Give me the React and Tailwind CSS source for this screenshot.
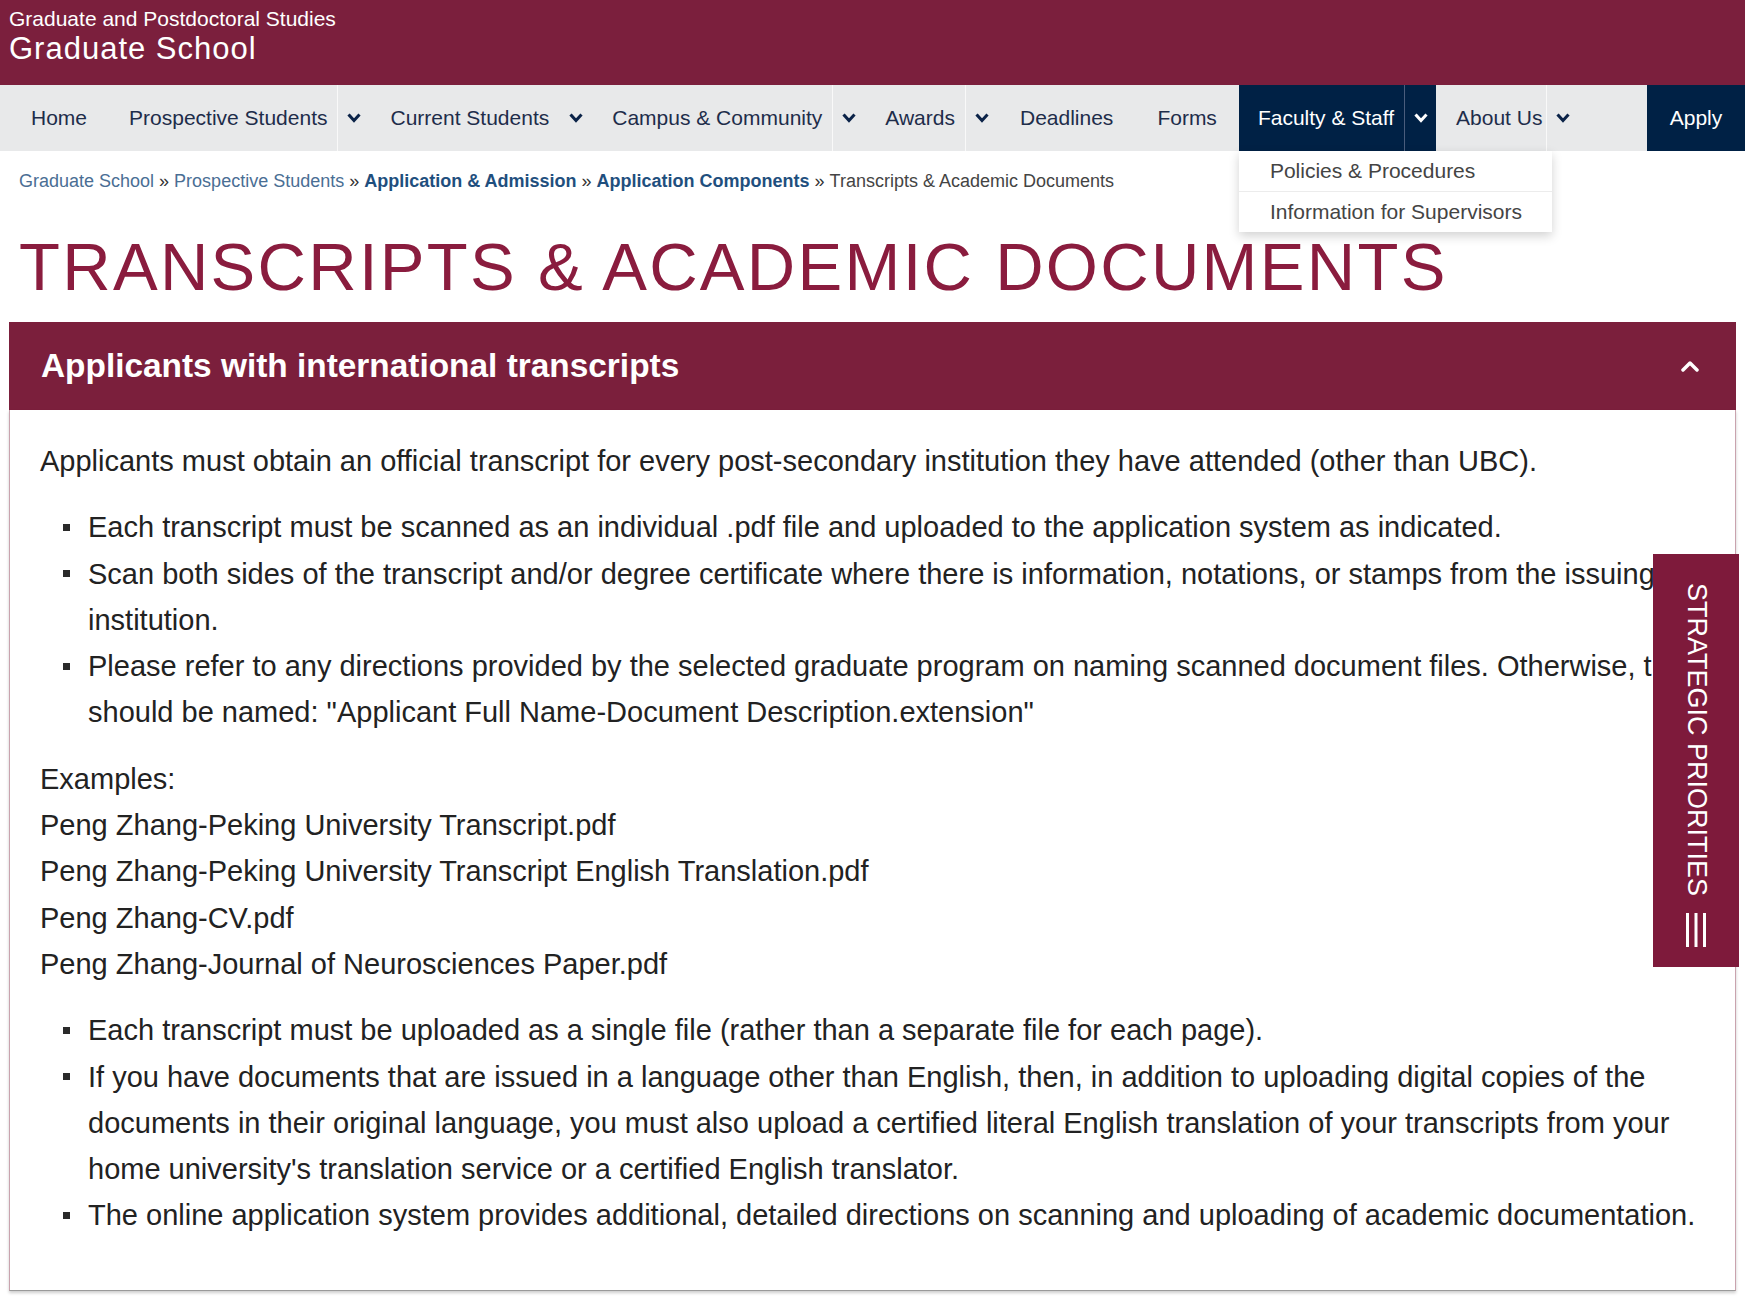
import React from 'react'

const Chevron = ({ className = '' }) => (
  <svg viewBox="0 0 14 12" className={`w-[14px] h-[12px] ${className}`} fill="none" stroke="currentColor" strokeWidth="3" strokeLinecap="square">
    <polyline points="2.5,3.5 7,8.5 11.5,3.5" />
  </svg>
)

function NavLink({ label }) {
  return <a className="flex items-center px-[22px] h-full text-[#1e2d4a]">{label}</a>
}

function NavDrop({ label, divider = true, textPr = 'pr-[10px]' }) {
  return (
    <div className="flex items-center h-full">
      <a className={`flex items-center pl-[20px] ${textPr} h-full text-[#1e2d4a]`}>{label}</a>
      <button className={`flex items-center justify-center w-[33px] h-full text-[#0b2348] ${divider ? 'border-l border-[#f9f9f9]' : ''}`}>
        <Chevron />
      </button>
    </div>
  )
}

const bullets1 = [
  'Each transcript must be scanned as an individual .pdf file and uploaded to the application system as indicated.',
  'Scan both sides of the transcript and/or degree certificate where there is information, notations, or stamps from the issuing institution.',
  'Please refer to any directions provided by the selected graduate program on naming scanned document files. Otherwise, they should be named: "Applicant Full Name-Document Description.extension"',
]

const bullets2 = [
  'Each transcript must be uploaded as a single file (rather than a separate file for each page).',
  "If you have documents that are issued in a language other than English, then, in addition to uploading digital copies of the documents in their original language, you must also upload a certified literal English translation of your transcripts from your home university's translation service or a certified English translator.",
  'The online application system provides additional, detailed directions on scanning and uploading of academic documentation.',
]

function BulletList({ items, className = '' }) {
  return (
    <ul className={className}>
      {items.map((t, i) => (
        <li key={i} className="flex">
          <span className="flex items-center w-[48px] h-[46.3px] pl-[23px] shrink-0">
            <span className="block w-[7px] h-[7px] bg-[#2a2a2a]" />
          </span>
          <span className="flex-1">{t}</span>
        </li>
      ))}
    </ul>
  )
}

export default function App() {
  return (
    <div className="relative w-full h-[1301px] overflow-hidden bg-white font-['Liberation_Sans',Arial,sans-serif]">
      {/* top banner */}
      <header className="h-[85px] bg-[#7b1f3d] text-white pl-[9px] pt-[7px]">
        <p className="text-[21px] leading-[24px]">Graduate and Postdoctoral Studies</p>
        <p className="text-[31px] leading-[36px] tracking-[1px]">Graduate School</p>
      </header>

      {/* main nav */}
      <nav className="flex items-center h-[66px] bg-[#e8e9ea] pl-[9px] text-[21px]">
        <NavLink label="Home" />
        <NavDrop label="Prospective Students" />
        <NavDrop label="Current Students" divider={false} />
        <NavDrop label="Campus & Community" />
        <NavDrop label="Awards" />
        <NavLink label="Deadlines" />
        <NavLink label="Forms" />
        <div className="relative flex items-center h-full bg-[#002145] text-white">
          <a className="flex items-center h-full pl-[19px] pr-[10px]">Faculty &amp; Staff</a>
          <button className="flex items-center justify-center w-[32px] h-full border-l border-[#4a5d7c]">
            <Chevron />
          </button>
          <div className="absolute left-0 top-full z-10 w-[313px] bg-white shadow-[0_4px_10px_rgba(0,0,0,0.18)] text-[#444] text-[21px]">
            <div className="h-[41px] flex items-center pl-[31px] border-b border-[#ececec]">Policies &amp; Procedures</div>
            <div className="h-[40px] flex items-center pl-[31px]">Information for Supervisors</div>
          </div>
        </div>
        <NavDrop label="About Us" textPr="pr-[4px]" />
        <div className="flex-1" />
        <a className="flex items-center justify-center w-[98px] h-full bg-[#002145] text-white">Apply</a>
      </nav>

      {/* breadcrumb */}
      <div className="pl-[19px] pt-[18px] text-[18px] leading-[24px] text-[#333]">
        <a className="text-[#4a6e94]">Graduate School</a>
        <span className="mx-[5px]">»</span>
        <a className="text-[#4a6e94]">Prospective Students</a>
        <span className="mx-[5px]">»</span>
        <a className="font-bold text-[#1f4f7e]">Application &amp; Admission</a>
        <span className="mx-[5px]">»</span>
        <a className="font-bold text-[#1f4f7e]">Application Components</a>
        <span className="mx-[5px]">»</span>
        <span className="text-[#444]">Transcripts &amp; Academic Documents</span>
      </div>

      <h1 className="mt-[40px] ml-[19px] text-[67px] leading-[67px] tracking-[2.3px] text-[#8a1c3e]">
        TRANSCRIPTS &amp; ACADEMIC DOCUMENTS
      </h1>

      {/* accordion */}
      <section className="mx-[9px] mt-[22px]">
        <div className="flex items-center justify-between h-[88px] bg-[#7b1f3c] pl-[32px] pr-[36px] text-white">
          <h2 className="text-[33.4px] font-bold">Applicants with international transcripts</h2>
          <svg viewBox="0 0 20 12" className="w-[20px] h-[12px]" fill="none" stroke="currentColor" strokeWidth="3.5" strokeLinecap="round" strokeLinejoin="round">
            <polyline points="3,10 10,3 17,10" />
          </svg>
        </div>
        <div className="border-x border-b border-x-[#c9a3ae] border-b-[#9a9a9a] shadow-[0_2px_3px_rgba(0,0,0,0.2)] pl-[30px] pr-[18px] pt-[28px] pb-[31px] text-[29px] leading-[46.3px] text-[#222]">
          <p>Applicants must obtain an official transcript for every post-secondary institution they have attended (other than UBC).</p>
          <BulletList items={bullets1} className="mt-[20px]" />
          <div className="mt-[20px]">
            <p>Examples:</p>
            <p>Peng Zhang-Peking University Transcript.pdf</p>
            <p>Peng Zhang-Peking University Transcript English Translation.pdf</p>
            <p>Peng Zhang-CV.pdf</p>
            <p>Peng Zhang-Journal of Neurosciences Paper.pdf</p>
          </div>
          <BulletList items={bullets2} className="mt-[20px] mb-[20px]" />
        </div>
      </section>

      {/* strategic priorities tab */}
      <div className="absolute right-[6px] top-[554px] w-[86px] h-[413px] bg-[#7e1a3b] flex flex-col items-center pt-[29px] text-white">
        <span className="[writing-mode:vertical-rl] text-[27px] leading-[27px]">STRATEGIC PRIORITIES</span>
        <svg viewBox="0 0 22 34" className="mt-[17px] w-[22px] h-[34px]" fill="currentColor">
          <rect x="1" y="0" width="3" height="34" />
          <rect x="9.5" y="0" width="3" height="34" />
          <rect x="18" y="0" width="3" height="34" />
        </svg>
      </div>
    </div>
  )
}
